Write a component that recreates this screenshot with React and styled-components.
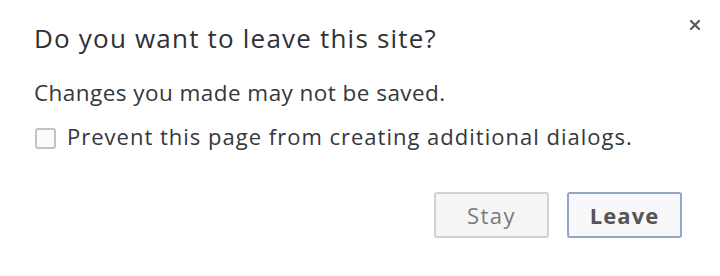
import React from "react";
import styled, { createGlobalStyle } from "styled-components";

const Global = createGlobalStyle`
  html, body { margin: 0; padding: 0; background: #ffffff; }
  body { font-family: "Open Sans", "Noto Sans", sans-serif; }
`;

const Dialog = styled.div`
  box-sizing: border-box;
  width: 720px;
  height: 276px;
  padding: 20px 38px 0 34px;
  background: #ffffff;
  display: flex;
  flex-direction: column;
`;

const Header = styled.div`
  display: flex;
  justify-content: space-between;
  align-items: flex-start;
`;

const Title = styled.h1`
  margin: 0;
  font-size: 26px;
  font-weight: 400;
  line-height: 36px;
  letter-spacing: 1.2px;
  color: #2f3135;
`;

const Close = styled.button`
  margin: -2px -20px 0 0;
  padding: 0;
  width: 14px;
  height: 14px;
  border: 0;
  background: none;
  display: flex;
  align-items: center;
  justify-content: center;
  cursor: pointer;
`;

const Message = styled.p`
  margin: 22px 0 0 0;
  font-size: 22.5px;
  line-height: 30px;
  letter-spacing: 0.45px;
  color: #36373a;
`;

const CheckRow = styled.label`
  margin-top: 13px;
  padding-left: 1px;
  display: flex;
  align-items: center;
  gap: 11px;
  font-size: 22px;
  line-height: 30px;
  letter-spacing: 1px;
  color: #36373a;
`;

const Box = styled.span`
  box-sizing: border-box;
  width: 21px;
  height: 21px;
  margin-top: 4px;
  border: 2px solid #c4c4c4;
  border-radius: 3px;
  background: #fbfbfb;
  flex: none;
`;

const Footer = styled.div`
  margin-top: 41px;
  display: flex;
  justify-content: flex-end;
  gap: 18px;
`;

const Button = styled.button`
  box-sizing: border-box;
  width: 115px;
  height: 46px;
  border-radius: 3px;
  border: 2px solid ${(p) => (p.$primary ? "#94a5c8" : "#d2d2d2")};
  background: ${(p) => (p.$primary ? "#f8f8fa" : "#f5f5f5")};
  font-family: "Open Sans", "Noto Sans", sans-serif;
  font-size: 22px;
  letter-spacing: ${(p) => (p.$primary ? "1.1px" : "1.5px")};
  font-weight: ${(p) => (p.$primary ? 700 : 400)};
  color: ${(p) => (p.$primary ? "#555557" : "#7a7a7a")};
  cursor: pointer;
`;

export default function App() {
  return (
    <>
      <Global />
      <Dialog>
        <Header>
          <Title>Do you want to leave this site?</Title>
          <Close aria-label="Close">
            <svg width="12" height="12" viewBox="0 0 12 12">
              <path d="M2 2 L10 10 M10 2 L2 10" stroke="#58595b" strokeWidth="2.2" strokeLinecap="round" />
            </svg>
          </Close>
        </Header>
        <Message>Changes you made may not be saved.</Message>
        <CheckRow>
          <Box />
          Prevent this page from creating additional dialogs.
        </CheckRow>
        <Footer>
          <Button>Stay</Button>
          <Button $primary>Leave</Button>
        </Footer>
      </Dialog>
    </>
  );
}
